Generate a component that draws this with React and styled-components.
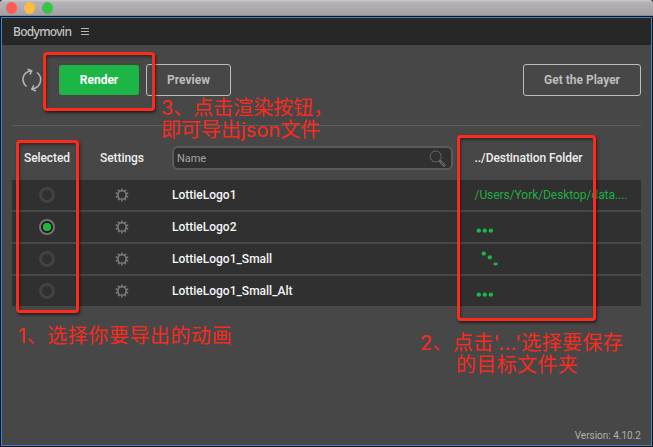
import React from "react";
import styled, { createGlobalStyle, css } from "styled-components";

const Global = createGlobalStyle`
  * { box-sizing: border-box; }
  body { margin: 0; overflow: hidden; background: #1b1b1b; }
`;

const Window = styled.div`
  position: relative;
  width: 653px;
  height: 447px;
  display: flex;
  flex-direction: column;
  background: #171717;
  font-family: Roboto, "Noto Sans CJK SC", sans-serif;
  white-space: nowrap;
`;

const TitleBar = styled.header`
  flex: none;
  height: 16px;
  padding: 2px 6px 0;
  display: flex;
  gap: 7px;
  background: linear-gradient(#cfcdcf 0, #b5b3b5 2px, #a3a1a3 100%);
  border-bottom: 1px solid #8d8b8d;
  border-radius: 3px 3px 0 0;
`;

const Light = styled.span`
  width: 11px;
  height: 12px;
  border-radius: 50%;
  background: ${(p) => p.$color};
`;

const Panel = styled.main`
  flex: none;
  width: 651px;
  height: 429px;
  margin: 1px 1px 0;
  display: flex;
  flex-direction: column;
  border: 1px solid #3c82cf;
  background: #474747;
`;

const TabBar = styled.div`
  flex: none;
  height: 27px;
  padding: 0 0 0 11px;
  display: flex;
  align-items: center;
  gap: 10px;
  background: #272727;
  color: #c4c4c4;
`;

const TabName = styled.span`
  width: 58px;
  font: 500 12px/27px "Noto Sans", sans-serif;
  letter-spacing: -0.7px;
`;

const Toolbar = styled.div`
  flex: none;
  height: 81px;
  margin: 0 10px;
  padding: 19px 0 0 10px;
  display: flex;
  align-items: flex-start;
  border-bottom: 1px solid #5d5d5d;
`;

const Refresh = styled.svg`
  width: 22px;
  height: 24px;
  margin: 4px 15px 0 0;
`;

const Button = styled.button`
  width: ${(p) => p.$width}px;
  height: 32px;
  padding: 0;
  border: 1px solid #bdbdbd;
  border-radius: 3px;
  background: transparent;
  color: #bdbdbd;
  font: 700 12px/30px Roboto, sans-serif;
  ${(p) =>
    p.$primary &&
    css`
      height: 30px;
      margin: 1px 7px 0 0;
      border: 0;
      background: #1db646;
      color: #fff;
    `}
  ${(p) => p.$end && css`margin-left: auto;`}
`;

const columns = css`
  display: grid;
  grid-template-columns: 70px 80px 10px 281px 21.5px 1fr;
  align-items: center;
`;

const Head = styled.div`
  ${columns}
  flex: none;
  height: 54px;
  margin: 0 10px;
  padding-top: 10px;
  color: #eee;
  font-size: 12px;
  font-weight: 500;
  letter-spacing: -0.06px;
`;

const Cell = styled.div`
  grid-column: ${(p) => p.$col};
  display: flex;
  justify-content: ${(p) => (p.$center ? "center" : "flex-start")};
`;

const Search = styled.div`
  grid-column: 4;
  height: 24px;
  padding: 0 5px 0 3px;
  display: flex;
  align-items: center;
  justify-content: space-between;
  border: 2px solid #5b5b5b;
  border-radius: 6px;
  background: #303030;
  color: #a5a5a5;
  font-size: 11px;
  font-weight: 400;
`;

const Rows = styled.div`
  margin: 0 10px;
  display: flex;
  flex-direction: column;
  gap: 2px;
`;

const Row = styled.div`
  ${columns}
  height: 30px;
  background: #303030;
  color: #f5f5f5;
  font-size: 12px;
  font-weight: 500;
`;

const Radio = styled.span`
  width: 16px;
  height: 16px;
  border-radius: 50%;
  border: 3px solid #434343;
  ${(p) =>
    p.$on &&
    css`
      border: 2.5px solid #747474;
      background: radial-gradient(circle, #1fb63c 0 4px, #101010 4.6px);
      background-clip: padding-box;
    `}
`;

const Path = styled.span`
  color: #20ac45;
  font-weight: 400;
  letter-spacing: -0.06px;
`;

const Dots = styled.svg`
  width: 28px;
  height: 30px;
`;

const Version = styled.footer`
  margin: auto 10px 2px auto;
  color: #b0b0b0;
  font-size: 10px;
  line-height: 14px;
`;

const Highlight = styled.div`
  position: absolute;
  left: ${(p) => p.$x}px;
  top: ${(p) => p.$y}px;
  width: ${(p) => p.$w}px;
  height: ${(p) => p.$h}px;
  border: 3px solid #fc2b1d;
  border-radius: 4px;
  box-shadow: 1px 2px 3px rgba(0, 0, 0, 0.55), inset 1px 2px 3px rgba(0, 0, 0, 0.4);
`;

const Note = styled.div`
  position: absolute;
  left: ${(p) => p.$x}px;
  top: ${(p) => p.$y}px;
  color: #f92b1e;
  font: 400 20px/22px Inter, "Noto Sans CJK SC", sans-serif;
  letter-spacing: ${(p) => p.$spacing || 0}px;
`;

const NoteLine = styled.div`
  padding-left: ${(p) => p.$indent || 0}px;
`;

const Gear = () => (
  <svg width="14" height="14" viewBox="0 0 14 14" fill="none" stroke="#7a7a7a">
    <circle cx="7" cy="7" r="4.2" strokeWidth="1.600" />
    {[0, 36, 72, 108, 144, 180, 216, 252, 288, 324].map((a) => (
      <path key={a} d="M7 2.600V.4" strokeWidth="1.6" transform={`rotate(${a} 7 7)`} />
    ))}
  </svg>
);

const FLAT = [[3.8, 18.7], [9.8, 18.7], [15.8, 18.7]];
const FALLING = [[8.8, 9.5], [14.8, 13.3], [20.600, 20, 1.4]];

const compositions = [
  { name: "LottieLogo1", path: "/Users/York/Desktop/data...." },
  { name: "LottieLogo2", selected: true, dots: FLAT },
  { name: "LottieLogo1_Small", dots: FALLING },
  { name: "LottieLogo1_Small_Alt", dots: FLAT },
];

export default function App() {
  return (
    <Window>
      <Global />
      <TitleBar>
        <Light $color="#fc5b57" />
        <Light $color="#fdbc40" />
        <Light $color="#34c648" />
      </TitleBar>
      <Panel>
        <TabBar>
          <TabName>Bodymovin</TabName>
          <svg width="8" height="9" viewBox="0 0 8 9" stroke="#b8b8b8">
            <path d="M0 1.5h8M0 4.5h8M0 7.5h8" />
          </svg>
        </TabBar>
        <Toolbar>
          <Refresh viewBox="0 0 22 24" fill="none" stroke="#b5b5b5" strokeWidth="1.5">
            <path d="M4.500 18.500C-1.500 13 .5 4 9 3M5.500 1.200l4.300 1.600-2 3.800" />
            <path d="M15 4.500c6.500 5 4 15-4.500 16.500M14 23l-4.200-1.800 2-3.900" />
          </Refresh>
          <Button $primary $width={80}>Render</Button>
          <Button $width={85}>Preview</Button>
          <Button $end $width={118}>Get the Player</Button>
        </Toolbar>
        <Head>
          <Cell $col={1} $center>Selected</Cell>
          <Cell $col={2} $center>Settings</Cell>
          <Search>
            Name
            <svg width="17" height="17" viewBox="0 0 17 17" fill="none" stroke="#6b6b6b">
              <circle cx="6.700" cy="6.500" r="5.500" />
              <path d="M10.500 10.500l1.500 1.500" />
              <path d="M11.500 11.500l3.500 3.700" strokeWidth="3" strokeLinecap="round" />
              <path d="M12 12l3 3.200" stroke="#303030" />
            </svg>
          </Search>
          <Cell $col={6}>../Destination Folder</Cell>
        </Head>
        <Rows>
          {compositions.map((c) => (
            <Row key={c.name}>
              <Cell $col={1} $center><Radio $on={c.selected} /></Cell>
              <Cell $col={2} $center><Gear /></Cell>
              <Cell $col={4}>{c.name}</Cell>
              <Cell $col={6}>
                {c.path ? (
                  <Path>{c.path}</Path>
                ) : (
                  <Dots fill="#1fb446">
                    {c.dots.map(([x, y, ry = 2.1]) => (
                      <ellipse key={x} cx={x} cy={y} rx="2.2" ry={ry} />
                    ))}
                  </Dots>
                )}
              </Cell>
            </Row>
          ))}
        </Rows>
        <Version>Version: 4.10.2</Version>
      </Panel>
      <Highlight $x={43} $y={52} $w={112} $h={59} />
      <Highlight $x={16} $y={140} $w={63} $h={173} />
      <Highlight $x={457} $y={135} $w={139} $h={186} />
      <Note $x={161} $y={97}>
        <NoteLine>3、点击渲染按钮，</NoteLine>
        <NoteLine>即可导出json文件</NoteLine>
      </Note>
      <Note $x={18} $y={325} $spacing={0.55}>
        <NoteLine>1、选择你要导出的动画</NoteLine>
      </Note>
      <Note $x={420} $y={332} $spacing={0.35}>
        <NoteLine>2、点击'...'选择要保存</NoteLine>
        <NoteLine $indent={36}>的目标文件夹</NoteLine>
      </Note>
    </Window>
  );
}
